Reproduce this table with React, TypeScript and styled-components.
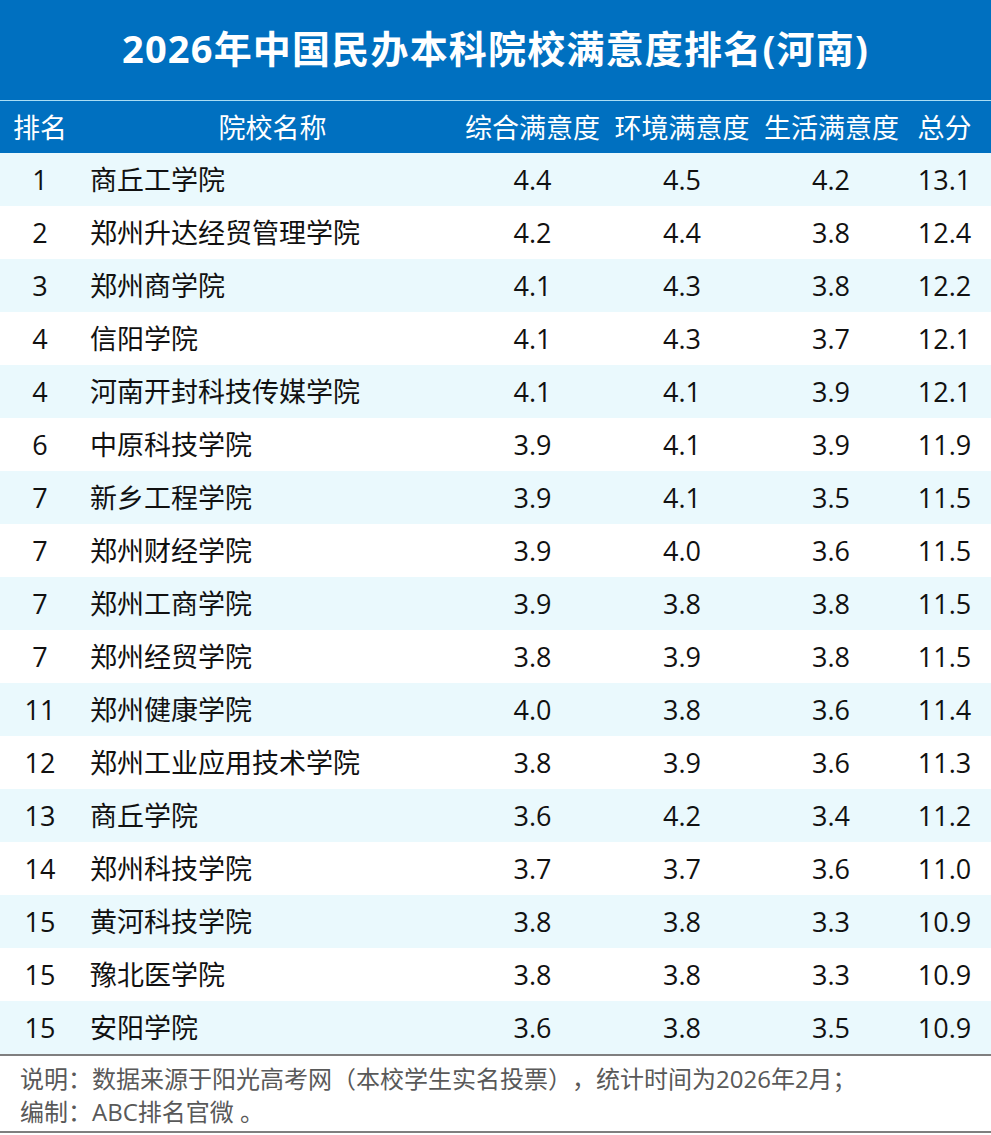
import React from "react";
import styled, { createGlobalStyle } from "styled-components";

const GlobalStyle = createGlobalStyle`
  html, body { margin: 0; padding: 0; background: #ffffff; }
  body { font-family: "Open Sans", "Noto Sans CJK SC", sans-serif; }
`;

const COLS = "80px 385px 135px 164px 134px 93px";

const Page = styled.div`
  width: 991px;
  background: #ffffff;
`;

const TitleBar = styled.div`
  height: 101px;
  background: #0070c0;
  border-bottom: 1px solid #a9def5;
  display: flex;
  align-items: center;
  justify-content: center;
  box-sizing: border-box;
  padding-bottom: 4px;
`;

const Title = styled.h1`
  margin: 0;
  color: #ffffff;
  font-family: "Open Sans", "Noto Sans CJK SC", sans-serif;
  font-weight: 700;
  font-size: 38px;
  letter-spacing: 1.2px;
  line-height: 1;
`;

const HeaderRow = styled.div`
  display: grid;
  grid-template-columns: ${COLS};
  height: 52px;
  background: #0070c0;
  color: #ffffff;
  font-size: 27px;
  align-items: center;
`;

const HeadCell = styled.div`
  text-align: center;
  white-space: nowrap;
  line-height: 1;
`;

const Row = styled.div<{ $shade: boolean }>`
  display: grid;
  grid-template-columns: ${COLS};
  height: 53px;
  align-items: center;
  background: ${(p) => (p.$shade ? "#eaf9fd" : "#ffffff")};
  color: #111111;
  font-size: 27px;
`;

const Cell = styled.div<{ $left?: boolean }>`
  text-align: ${(p) => (p.$left ? "left" : "center")};
  padding-left: ${(p) => (p.$left ? "10px" : "0")};
  white-space: nowrap;
  line-height: 1;
`;

const Footer = styled.div`
  border-top: 2px solid #7f7f7f;
  border-bottom: 2px solid #7f7f7f;
  padding: 6px 0 3px 20px;
  color: #595959;
  font-size: 24px;
  line-height: 33px;
  text-spacing-trim: space-all;
`;

const FootLine = styled.div`
  white-space: nowrap;
`;

type R = [string, string, string, string, string, string];

const rows: R[] = [
  ["1", "商丘工学院", "4.4", "4.5", "4.2", "13.1"],
  ["2", "郑州升达经贸管理学院", "4.2", "4.4", "3.8", "12.4"],
  ["3", "郑州商学院", "4.1", "4.3", "3.8", "12.2"],
  ["4", "信阳学院", "4.1", "4.3", "3.7", "12.1"],
  ["4", "河南开封科技传媒学院", "4.1", "4.1", "3.9", "12.1"],
  ["6", "中原科技学院", "3.9", "4.1", "3.9", "11.9"],
  ["7", "新乡工程学院", "3.9", "4.1", "3.5", "11.5"],
  ["7", "郑州财经学院", "3.9", "4.0", "3.6", "11.5"],
  ["7", "郑州工商学院", "3.9", "3.8", "3.8", "11.5"],
  ["7", "郑州经贸学院", "3.8", "3.9", "3.8", "11.5"],
  ["11", "郑州健康学院", "4.0", "3.8", "3.6", "11.4"],
  ["12", "郑州工业应用技术学院", "3.8", "3.9", "3.6", "11.3"],
  ["13", "商丘学院", "3.6", "4.2", "3.4", "11.2"],
  ["14", "郑州科技学院", "3.7", "3.7", "3.6", "11.0"],
  ["15", "黄河科技学院", "3.8", "3.8", "3.3", "10.9"],
  ["15", "豫北医学院", "3.8", "3.8", "3.3", "10.9"],
  ["15", "安阳学院", "3.6", "3.8", "3.5", "10.9"],
];

export default function App() {
  return (
    <Page>
      <GlobalStyle />
      <TitleBar>
        <Title>2026年中国民办本科院校满意度排名(河南)</Title>
      </TitleBar>
      <HeaderRow>
        <HeadCell>排名</HeadCell>
        <HeadCell>院校名称</HeadCell>
        <HeadCell>综合满意度</HeadCell>
        <HeadCell>环境满意度</HeadCell>
        <HeadCell>生活满意度</HeadCell>
        <HeadCell>总分</HeadCell>
      </HeaderRow>
      {rows.map((r, i) => (
        <Row key={i} $shade={i % 2 === 0}>
          <Cell>{r[0]}</Cell>
          <Cell $left>{r[1]}</Cell>
          <Cell>{r[2]}</Cell>
          <Cell>{r[3]}</Cell>
          <Cell>{r[4]}</Cell>
          <Cell>{r[5]}</Cell>
        </Row>
      ))}
      <Footer>
        <FootLine>说明：数据来源于阳光高考网（本校学生实名投票），统计时间为2026年2月；</FootLine>
        <FootLine>编制：ABC排名官微 。</FootLine>
      </Footer>
    </Page>
  );
}
